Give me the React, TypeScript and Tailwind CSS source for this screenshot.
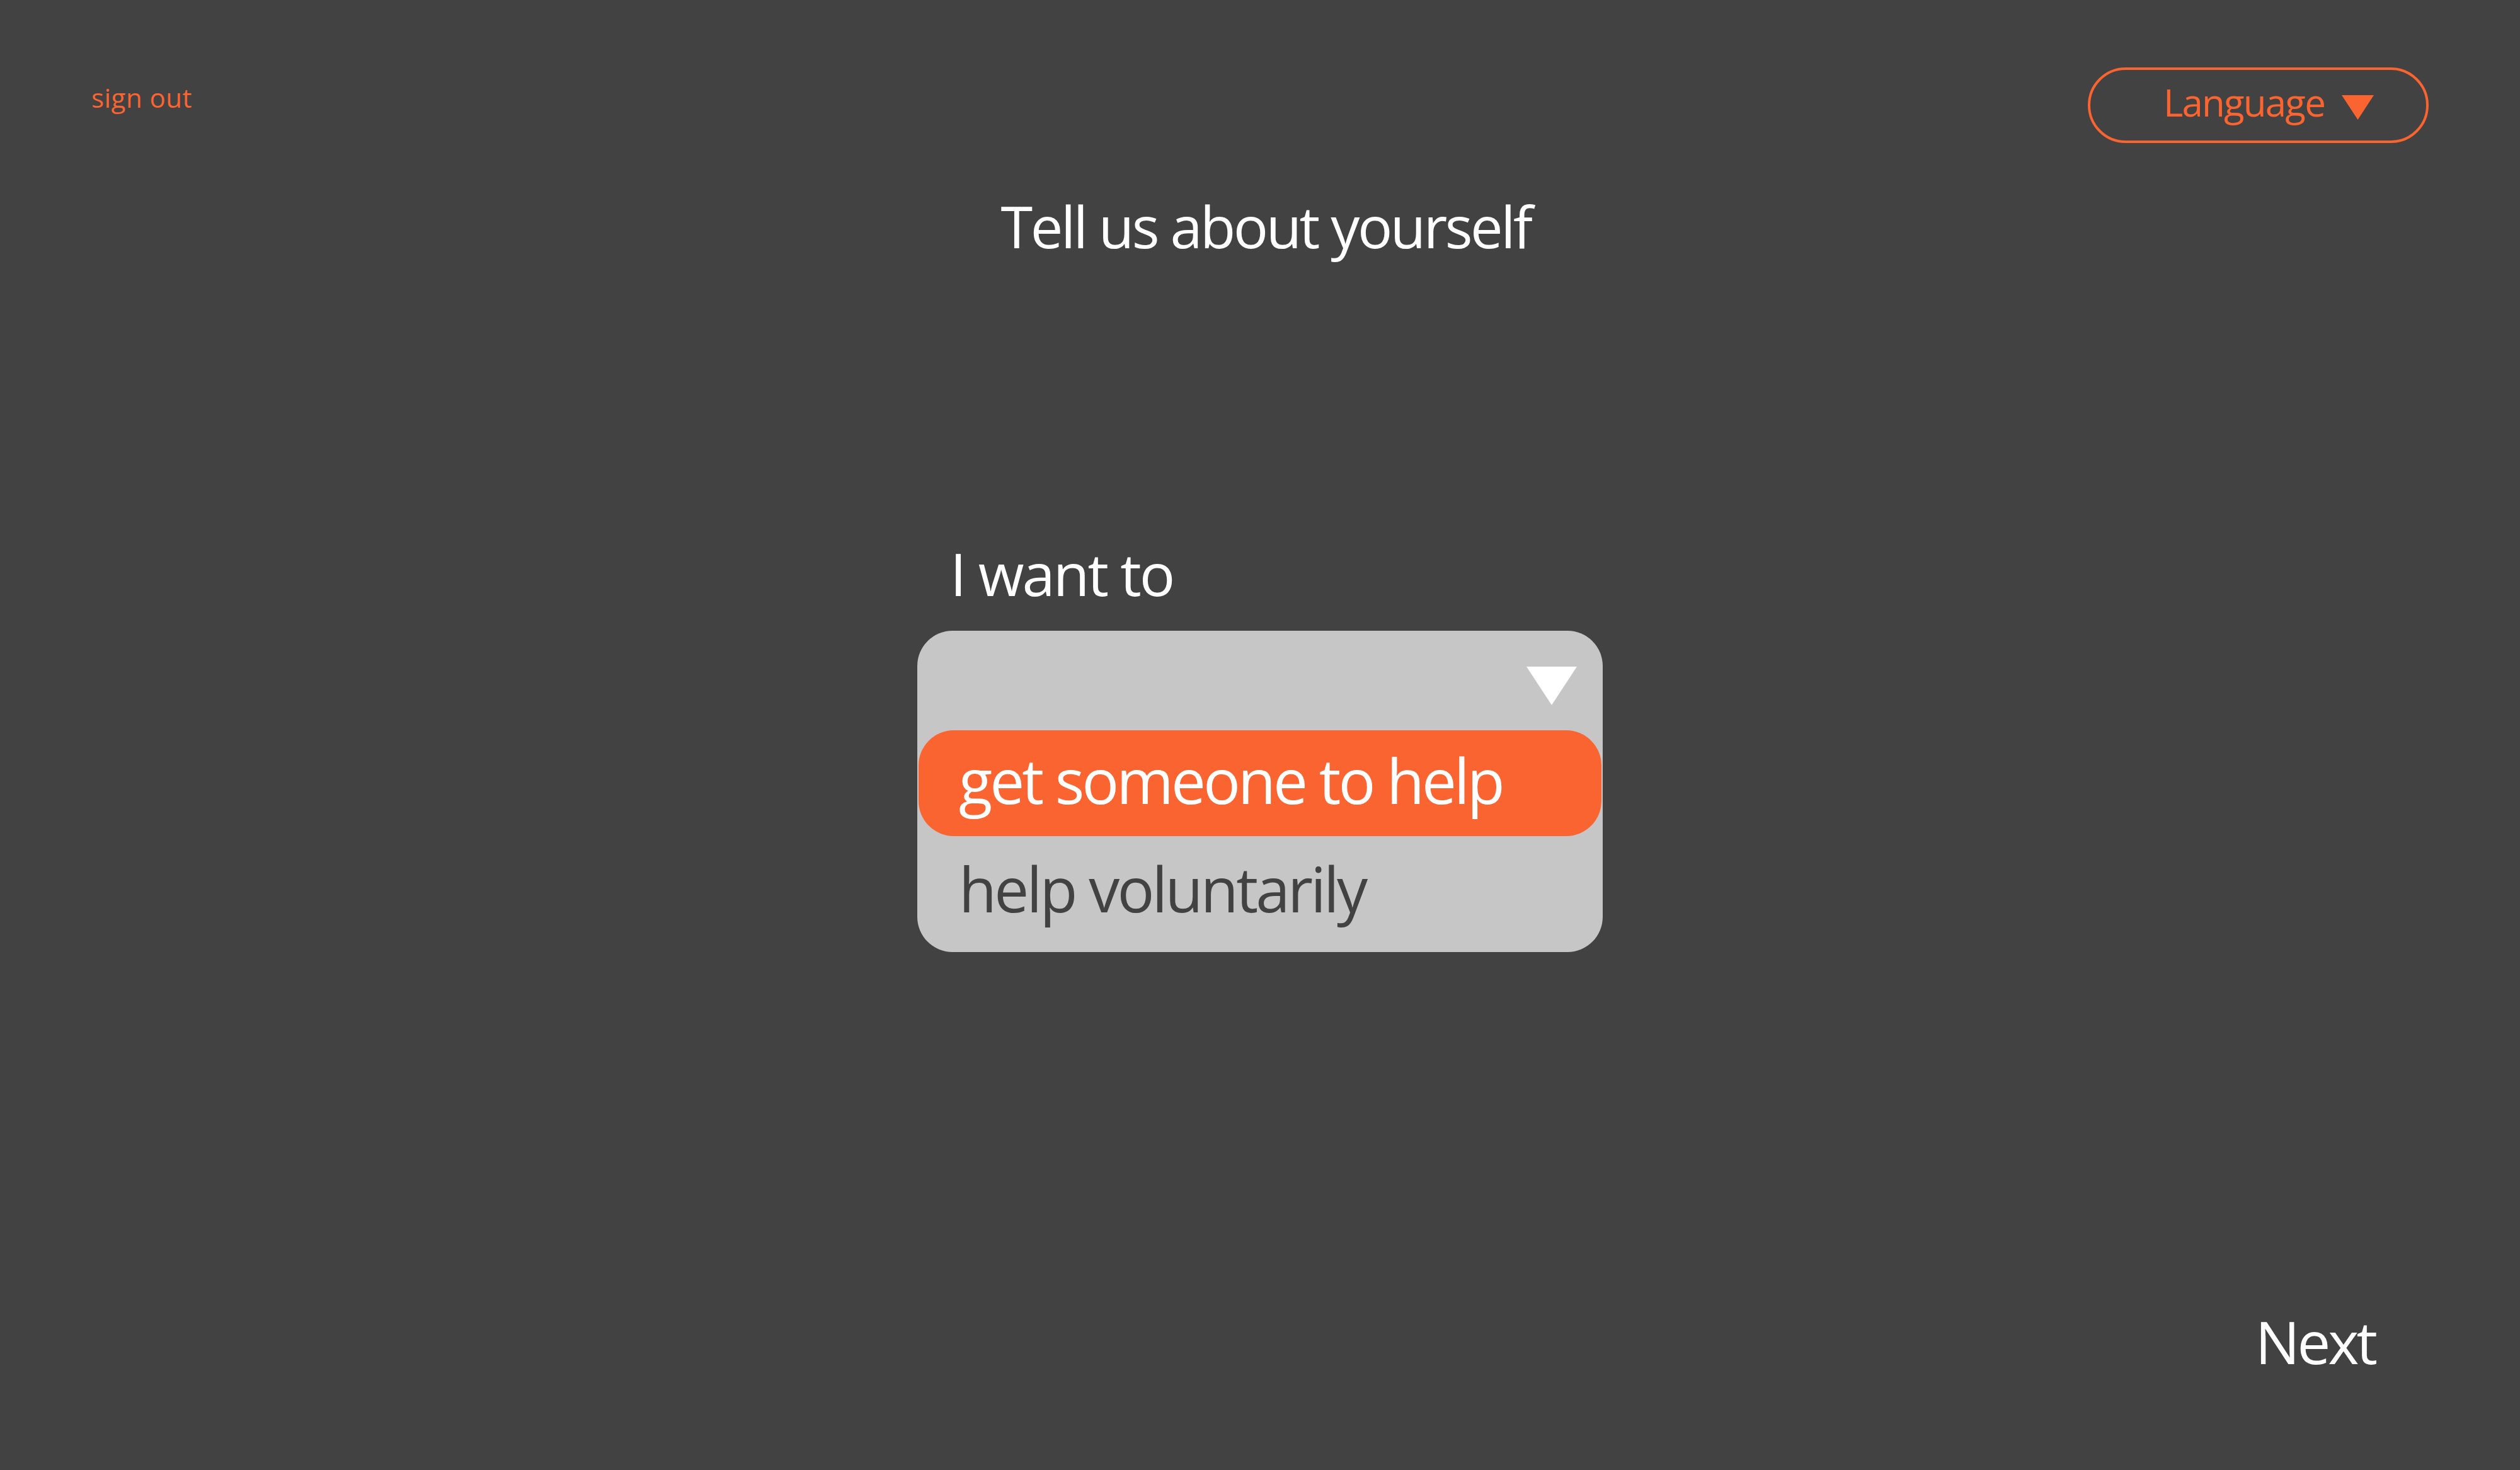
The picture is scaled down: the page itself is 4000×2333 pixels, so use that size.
function Triangle({ w, h, color }: { w: number; h: number; color: string }) {
  return (
    <svg width={w} height={h} viewBox={`0 0 ${w} ${h}`} className="block shrink-0">
      <polygon points={`0,0 ${w},0 ${w / 2},${h}`} fill={color} />
    </svg>
  );
}

export default function App() {
  return (
    <main className="flex flex-col w-[4000px] h-[2333px] bg-[#424242] font-['Open_Sans',sans-serif] overflow-hidden">
      {/* top bar */}
      <header className="flex justify-between items-start pt-[107px] pl-[145px] pr-[145px]">
        <button className="mt-[27px] text-[42px] leading-none text-[#fa6431] tracking-[0.5px]">
          sign out
        </button>
        <button className="flex items-start box-border w-[541px] h-[120px] border-[4px] border-[#fa6431] rounded-full pl-[116px] pt-[21px]">
          <span className="text-[60px] leading-none text-[#fa6431] tracking-[-1.8px]">Language</span>
          <span className="ml-[27px] mt-[19px]">
            <Triangle w={51} h={39} color="#fa6431" />
          </span>
        </button>
      </header>

      <h1 className="mt-[86px] text-center text-[92px] leading-none text-white tracking-[-3.5px] pl-[18px]">
        Tell us about yourself
      </h1>

      {/* form */}
      <section className="mt-[458px] mx-auto w-[1088px]">
        <label className="block pl-[52px] text-[94px] leading-none text-white tracking-[-3px]">
          I want to
        </label>
        <div className="mt-[44px] h-[510px] bg-[#c6c6c6] rounded-[56px] flex flex-col">
          <div className="h-[158px] flex justify-end items-start pt-[57px] pr-[41px]">
            <Triangle w={80} h={61} color="#ffffff" />
          </div>
          <div className="h-[168px] mx-[2px] rounded-[56px] bg-[#fa6431] pt-[30px] pl-[64px]">
            <span className="text-[98px] leading-none text-white tracking-[-4px]">
              get someone to help
            </span>
          </div>
          <div className="pt-[34px] pl-[66px]">
            <span className="text-[98px] leading-none text-[#424242] tracking-[-3.8px]">
              help voluntarily
            </span>
          </div>
        </div>
      </section>

      <footer className="mt-auto pb-[157px] flex justify-end pr-[230px]">
        <button className="text-[94px] leading-none text-white tracking-[-4px]">Next</button>
      </footer>
    </main>
  );
}
